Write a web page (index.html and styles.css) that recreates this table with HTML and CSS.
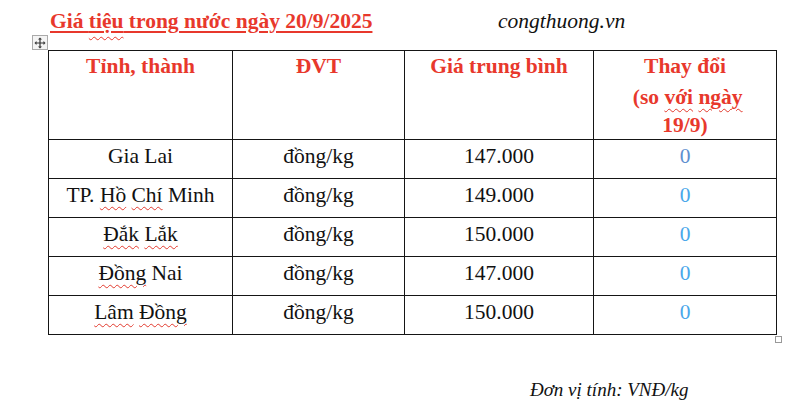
FILE: index.html
```html
<!DOCTYPE html>
<html lang="vi">
<head>
<meta charset="utf-8">
<title>Giá tiệu trong nước ngày 20/9/2025</title>
<link rel="stylesheet" href="styles.css">
</head>
<body>
<div class="page">
  <div class="head">
    <div class="title">Giá <span class="sp">tiệu</span> trong nước ngày 20/9/2025</div>
    <div class="source">congthuong.vn</div>
  </div>
  <div class="table-wrap">
    <span class="move-handle">
      <svg width="12" height="12" viewBox="0 0 12 12">
        <path d="M6 0.5 L8 2.5 H6.6 V5.4 H9.5 V4 L11.5 6 L9.5 8 V6.6 H6.6 V9.5 H8 L6 11.5 L4 9.5 H5.4 V6.6 H2.5 V8 L0.5 6 L2.5 4 V5.4 H5.4 V2.5 H4 Z" fill="#333"/>
      </svg>
    </span>
    <table class="price">
      <colgroup>
        <col class="c1"><col class="c2"><col class="c3"><col class="c4">
      </colgroup>
      <thead>
        <tr>
          <th>Tỉnh, thành</th>
          <th>ĐVT</th>
          <th>Giá trung bình</th>
          <th><span class="l1">Thay đổi</span><br>&nbsp;(so <span class="sp">với</span> <span class="sp">ngày</span><br>19/9)</th>
        </tr>
      </thead>
      <tbody>
        <tr><td>Gia Lai</td><td>đồng/kg</td><td>147.000</td><td class="chg first">0</td></tr>
        <tr><td>TP. <span class="sp">Hồ</span> <span class="sp">Chí</span> Minh</td><td>đồng/kg</td><td>149.000</td><td class="chg">0</td></tr>
        <tr><td><span class="sp">Đắk</span> <span class="sp">Lắk</span></td><td>đồng/kg</td><td>150.000</td><td class="chg">0</td></tr>
        <tr><td><span class="sp">Đồng</span> Nai</td><td>đồng/kg</td><td>147.000</td><td class="chg">0</td></tr>
        <tr><td><span class="sp">Lâm</span> <span class="sp">Đồng</span></td><td>đồng/kg</td><td>150.000</td><td class="chg">0</td></tr>
      </tbody>
    </table>
    <span class="resize-handle"></span>
  </div>
  <div class="foot">Đơn vị tính: VNĐ/kg</div>
</div>
</body>
</html>
```
FILE: styles.css
```css
html, body {
  margin: 0;
  padding: 0;
  background: #fff;
}
.page {
  width: 800px;
  height: 410px;
  font-family: "Liberation Serif", "Times New Roman", serif;
  color: #111;
  overflow: hidden;
}
.head {
  display: flex;
  align-items: baseline;
  padding: 9px 0 0 50px;
  height: 41px;
  box-sizing: border-box;
}
.title {
  font-size: 21.5px;
  font-weight: bold;
  color: #e8382c;
  text-decoration: underline;
  text-decoration-thickness: 2px;
  text-underline-offset: 3px;
  line-height: 24px;
  width: 448px;
}
.title .sp {
  text-decoration: underline wavy #e8382c;
  text-decoration-thickness: 1px;
  text-underline-offset: 8px;
}
.source {
  font-size: 21.5px;
  font-style: italic;
  line-height: 24px;
  color: #111;
}
.table-wrap {
  position: relative;
  margin-left: 48px;
  width: 729px;
  padding-top: 9px;
}
.move-handle {
  position: absolute;
  left: -16px;
  top: -6px;
  width: 14px;
  height: 13px;
  border: 1px solid #aaa;
  background: #f4f4f4;
  display: flex;
  align-items: center;
  justify-content: center;
}
.resize-handle {
  position: absolute;
  right: -5px;
  bottom: -8px;
  width: 5px;
  height: 5px;
  border: 1px solid #999;
  background: #fff;
}
.price {
  border-collapse: collapse;
  table-layout: fixed;
  width: 728px;
  font-size: 21.5px;
}
.c1 { width: 184px; }
.c2 { width: 172px; }
.c3 { width: 189px; }
.c4 { width: 183px; }
.price th, .price td {
  border: 1.4px solid #151515;
  text-align: center;
  vertical-align: top;
  padding: 1px 4px 0;
  line-height: 28px;
}
.price th {
  color: #e8382c;
  font-weight: bold;
  height: 87px;
  box-sizing: border-box;
}
.price th .l1 {
  display: inline-block;
  padding-bottom: 3px;
}
.price td {
  height: 39px;
  box-sizing: border-box;
  padding-top: 2px;
}
.price .sp {
  text-decoration: underline wavy #e23a2e;
  text-decoration-thickness: 1px;
  text-underline-offset: 4px;
}
.chg {
  color: #4aa7ea;
}
.chg.first {
  color: #5e8fcf;
}
.foot {
  padding: 44px 0 0 530px;
  font-size: 19px;
  font-style: italic;
  line-height: 22px;
  color: #111;
}
```
